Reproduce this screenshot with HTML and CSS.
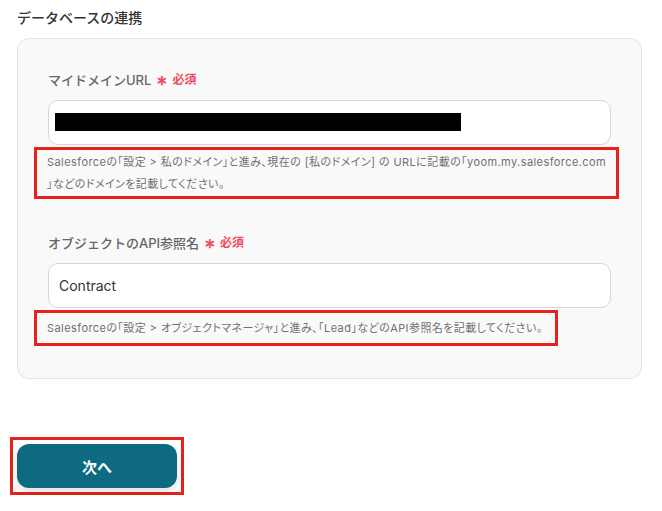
FILE: index.html
```html
<!DOCTYPE html>
<html lang="ja">
<head>
<meta charset="utf-8">
<link rel="stylesheet" href="styles.css">
</head>
<body>
<div class="page">
  <h2 class="title">データベースの連携</h2>
  <div class="card">
    <div class="field">
      <div class="label">マイドメインURL<span class="ast">∗</span><span class="req">必須</span></div>
      <div class="input"><span class="redact"></span></div>
      <div class="help help-wide">Salesforceの「設定 &gt; 私のドメイン」と進み、現在の [私のドメイン] の URLに記載の「yoom.my.salesforce.com<br>」などのドメインを記載してください。</div>
    </div>
    <div class="field field-2">
      <div class="label">オブジェクトのAPI参照名<span class="ast">∗</span><span class="req">必須</span></div>
      <div class="input"><span class="value">Contract</span></div>
      <div class="help help-narrow">Salesforceの「設定 &gt; オブジェクトマネージャ」と進み、「Lead」などのAPI参照名を記載してください。</div>
    </div>
  </div>
  <div class="actions">
    <div class="btn-frame"><button class="btn">次へ</button></div>
  </div>
</div>
</body>
</html>
```
FILE: styles.css
```css
* { box-sizing: border-box; }
html, body { margin: 0; padding: 0; background: #fff; }
body { font-family: "Inter", "Noto Sans CJK JP", sans-serif; color: #333; }
.page { padding: 8px 0 0 17px; width: 642px; }
.title { margin: 0; font-size: 14px; font-weight: 500; line-height: 20px; color: #333; }
.card {
  margin-top: 10px;
  width: 625px;
  background: #f9f9f9;
  border: 1px solid #e3e3e3;
  border-radius: 12px;
  padding: 32px 30px 32px 30px;
}
.field-2 { margin-top: 35px; }
.label { font-size: 13px; font-weight: 500; color: #666; line-height: 18px; display: flex; align-items: center; }
.ast { color: #ee4b5e; margin-left: 5px; font-size: 14px; font-weight: 700; }
.req { color: #ee4b5e; margin-left: 4px; font-size: 12px; font-weight: 700; }
.input {
  margin-top: 11px;
  height: 45px;
  background: #fff;
  border: 1px solid #d4d8de;
  border-radius: 10px;
  display: flex;
  align-items: center;
  padding: 0 10px 0 6px;
}
.redact { display: block; width: 406px; height: 18px; background: #000; margin-top: -2px; }
.value { font-size: 14px; color: #333; padding-left: 4px; }
.help {
  margin-top: 2px;
  margin-left: -14px;
  border: 3px solid #e5221c;
  padding: 1px 0 1px 10px;
  font-size: 11px;
  font-weight: 400;
  line-height: 22px;
  color: #707070;
  font-feature-settings: "palt";
  letter-spacing: 0.42px;
  white-space: nowrap;
}
.help-wide { width: 585px; }
.help-narrow { width: 524px; padding-top: 4px; padding-bottom: 4px; }
.actions { margin-top: 58px; margin-left: -7px; display: flex; }
.btn-frame { border: 3px solid #e5221c; padding: 4px; background: #fff; }
.btn {
  display: block;
  width: 160px;
  height: 44px;
  border: none;
  border-radius: 12px;
  background: #0d6a80;
  color: #fff;
  font-family: "Inter", "Noto Sans CJK JP", sans-serif;
  font-size: 15px;
  font-weight: 700;
  box-shadow: 0 4px 10px rgba(0,0,0,0.12);
}
```
